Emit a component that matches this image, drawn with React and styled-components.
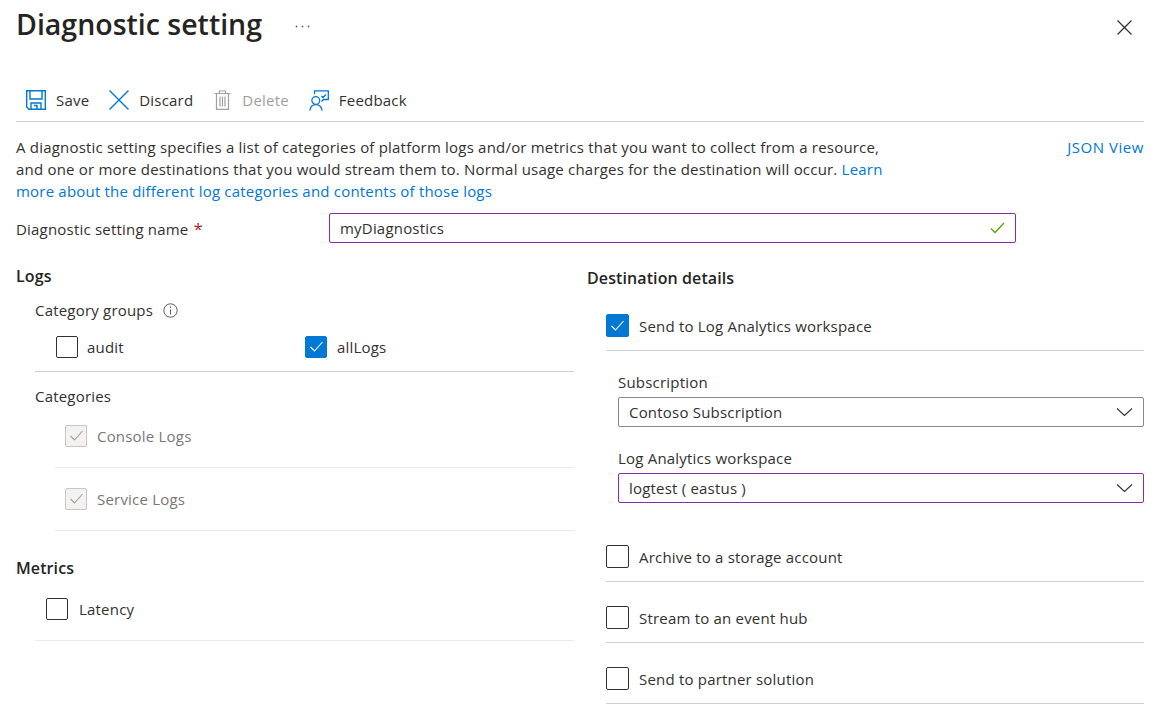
import React from "react";
import styled, { createGlobalStyle } from "styled-components";

const Global = createGlobalStyle`
  html, body { margin: 0; padding: 0; background: #fff; overflow: hidden; }
  body { font-family: "Open Sans", "Noto Sans", sans-serif; font-size: 15px; letter-spacing: 0.2px; color: #323130; }
`;
const Page = styled.div`
  width: 1160px; height: 724px; box-sizing: border-box; padding: 0 16px; overflow: hidden;
`;
const Header = styled.header`
  height: 50px; display: flex; align-items: center; position: relative;
`;
const Title = styled.h1`
  margin: 0 0 2px; font-size: 28.5px; font-weight: 600; color: #252423; letter-spacing: 0; line-height: 48px;
`;
const More = styled.span`
  margin-left: 33px; margin-top: 2px; display: flex;
`;
const Close = styled.span`
  margin-left: auto; margin-right: 11px; margin-top: 4px; display: flex;
`;
const Toolbar = styled.nav`
  margin-top: 26px; height: 46px; box-sizing: border-box; border-bottom: 1px solid #d2d0ce;
  display: flex; align-items: center; padding: 3px 0 0 10px; width: 1128px;
`;
const ToolItem = styled.span`
  display: flex; align-items: center; gap: ${p => p.$gap}px; margin-right: ${p => p.$mr}px;
  color: ${p => (p.$off ? "#a19f9d" : "#323130")};
`;
const Intro = styled.div`
  display: flex; justify-content: space-between; width: 1128px; margin-top: 14px;
`;
const Desc = styled.p`
  margin: 0; width: 868px; line-height: 22px;
`;
const A = styled.span`
  color: #0078d4;
`;
const JsonLink = styled.span`
  color: #0078d4; letter-spacing: 0.55px; padding-top: 1px;
`;
const NameRow = styled.div`
  display: flex; align-items: center; height: 30px; margin-top: 11px; width: 1000px;
`;
const NameLabel = styled.label`
  width: 313px; padding-top: 2px;
`;
const Req = styled.span`
  color: #a4262c; font-size: 17px; line-height: 15px; margin-left: 1px;
`;
const Field = styled.div`
  flex: ${p => (p.$grow ? 1 : "none")}; height: ${p => p.$h}px; box-sizing: border-box;
  border: 1px solid ${p => (p.$focus ? "#8a2da5" : "#8a8886")}; border-radius: 2px;
  display: flex; align-items: center; justify-content: space-between; padding: 0 10px;
`;
const Columns = styled.div`
  display: grid; grid-template-columns: 558px 557px; column-gap: 13px; width: 1128px;
`;
const Col = styled.section`
  min-width: 0;
`;
const H2 = styled.h2`
  margin: ${p => p.$mt}px 0 0; font-size: 16px; font-weight: 600; letter-spacing: 0.1px; color: #252423; line-height: 22px;
`;
const Indent = styled.div`
  margin-left: ${p => p.$l}px;
`;
const Sub = styled.div`
  display: flex; align-items: center; gap: 10px; line-height: 20px; padding-bottom: 2px; margin-top: ${p => p.$mt}px;
`;
const GroupRow = styled.div`
  display: grid; grid-template-columns: 249px 1fr; padding-left: 21px; height: 38px; box-sizing: border-box;
  margin-top: 12px; padding-top: 1px; border-bottom: 1px solid #d2d0ce; align-items: start;
`;
const Check = styled.label`
  display: flex; align-items: center; gap: ${p => p.$gap}px; height: 23px;
  color: ${p => (p.$off ? "#797775" : "#323130")};
`;
const RowLine = styled.div`
  height: ${p => p.$h}px; box-sizing: border-box; margin-left: ${p => p.$ml || 0}px;
  padding-left: ${p => p.$l || 0}px; padding-top: ${p => p.$t}px;
  border-bottom: 1px solid ${p => p.$c || "#edebe9"}; margin-top: ${p => p.$mt || 0}px;
`;
const Box = styled.span`
  width: ${p => p.$size}px; height: ${p => p.$size}px; flex: none; box-sizing: border-box; border-radius: 2px;
  display: flex; align-items: center; justify-content: center;
  border: 1px solid ${p => (p.$on ? "#0078d4" : p.$off ? "#c8c6c4" : "#323130")};
  background: ${p => (p.$on ? "#0078d4" : p.$off ? "#f3f2f1" : "#fff")};
`;
const Form = styled.div`
  padding-left: 31px; margin-top: 20px;
`;
const FieldLabel = styled.div`
  line-height: 22px; margin-top: ${p => p.$mt || 0}px; margin-bottom: 4px;
`;

const Tick = ({ c }) => (
  <svg width="15" height="13" viewBox="0 0 15 13" fill="none" stroke={c} strokeWidth="1.1"><path d="M1.5 7 L5.5 11 L13.5 2" /></svg>
);
const CheckBox = ({ on, off, label, gap = 10, size = 22 }) => (
  <Check $off={off} $gap={gap}>
    <Box $on={on} $off={off} $size={size}>{(on || off) && <Tick c={on ? "#fff" : "#a19f9d"} />}</Box>
    {label}
  </Check>
);
const Chevron = () => (
  <svg width="17" height="10" viewBox="0 0 17 10" fill="none" stroke="#323130" strokeWidth="1.1"><path d="M1 1.5 L8.5 8.5 L16 1.5" /></svg>
);

export default function App() {
  return (
    <Page>
      <Global />
      <Header>
        <Title>Diagnostic setting</Title>
        <More>
          <svg width="15" height="3" viewBox="0 0 15 3" fill="#605e5c"><circle cx="1.5" cy="1.5" r=".9"/><circle cx="7.5" cy="1.5" r=".9"/><circle cx="13.5" cy="1.5" r=".9"/></svg>
        </More>
        <Close>
          <svg width="17" height="17" viewBox="0 0 17 17" stroke="#323130" strokeWidth="1.2"><path d="M1.5 1.5 L15.5 15.5 M15.5 1.5 L1.5 15.5"/></svg>
        </Close>
      </Header>
      <Toolbar>
        <ToolItem $gap={10} $mr={20}>
          <svg width="20" height="20" viewBox="0 0 20 20" fill="none" stroke="#0078d4" strokeWidth="1.4"><path d="M.7.7 H19.3 V19.3 H3 L.7 17 Z M4 .7 V9 H16 V.7 M5 19.3 V13 H15 V19.3 M8 15.5 H11 V19" /></svg>
          Save
        </ToolItem>
        <ToolItem $gap={10} $mr={21}>
          <svg width="20" height="20" viewBox="0 0 20 20" fill="none" stroke="#0078d4" strokeWidth="1.4"><path d="M.5.5 L19.5 19.5 M19.5.5 L.5 19.5"/></svg>
          Discard
        </ToolItem>
        <ToolItem $off $gap={11} $mr={20}>
          <svg width="17" height="20" viewBox="0 0 17 20" fill="none" stroke="#a19f9d" strokeWidth="1.2"><path d="M0.5 3.5 H16.5 M5.5 3 V1 H11.5 V3 M2.5 3.5 V19.4 H14.5 V3.5 M6 6.5 V16.5 M8.5 6.5 V16.5 M11 6.5 V16.5"/></svg>
          Delete
        </ToolItem>
        <ToolItem $gap={10}>
          <svg width="20" height="21" viewBox="0 0 20 21" fill="none" stroke="#0078d4" strokeWidth="1.3"><path d="M5.5 4 V.8 H19.3 V9.5 H14.5 L12.5 11.5 M17 4.5 L14 7.5 L12.5 6"/><circle cx="6.8" cy="10.5" r="3.9"/><path d="M.8 20.5 C1.5 16.5 3.5 14.7 6.8 14.7 C10 14.7 12.3 16.5 13.2 20.5"/></svg>
          Feedback
        </ToolItem>
      </Toolbar>
      <Intro>
        <Desc>
          A diagnostic setting specifies a list of categories of platform logs and/or metrics that you want to collect from a resource, and one or more destinations that you would stream them to. Normal usage charges for the destination will occur. <A>Learn more about the different log categories and contents of those logs</A>
        </Desc>
        <JsonLink>JSON View</JsonLink>
      </Intro>
      <NameRow>
        <NameLabel>Diagnostic setting name <Req>*</Req></NameLabel>
        <Field $focus $grow $h={30}>
          myDiagnostics
          <svg width="15" height="12" viewBox="0 0 15 12" fill="none" stroke="#57a300" strokeWidth="1.3"><path d="M1 6.5 L5 10.5 L14 1"/></svg>
        </Field>
      </NameRow>
      <Columns>
        <Col>
          <H2 $mt={22}>Logs</H2>
          <Indent $l={19}>
            <Sub $mt={13}>
              Category groups
              <svg width="15" height="15" viewBox="0 0 15 15" fill="none" stroke="#605e5c"><circle cx="7.5" cy="7.5" r="6.7"/><path d="M7.5 6.5 V11.5 M7.5 3.5 V5"/></svg>
            </Sub>
            <GroupRow>
              <CheckBox label="audit" gap={9} />
              <CheckBox on label="allLogs" />
            </GroupRow>
            <Sub $mt={14}>Categories</Sub>
            <RowLine $h={60} $ml={20} $l={10} $t={16}><CheckBox off label="Console Logs" /></RowLine>
            <RowLine $h={63} $ml={20} $l={10} $t={19}><CheckBox off label="Service Logs" /></RowLine>
          </Indent>
          <H2 $mt={26}>Metrics</H2>
          <Indent $l={19}>
            <RowLine $h={62} $l={11} $t={18}><CheckBox label="Latency" gap={11} /></RowLine>
          </Indent>
        </Col>
        <Col>
          <H2 $mt={24}>Destination details</H2>
          <RowLine $h={67} $ml={19} $t={30} $c="#d2d0ce" $mt={-5}><CheckBox on size={23} label="Send to Log Analytics workspace" /></RowLine>
          <Form>
            <FieldLabel>Subscription</FieldLabel>
            <Field $h={30}>Contoso Subscription<Chevron /></Field>
            <FieldLabel $mt={20}>Log Analytics workspace</FieldLabel>
            <Field $focus $h={30}>logtest ( eastus )<Chevron /></Field>
          </Form>
          <RowLine $h={79} $ml={19} $t={42} $c="#d2d0ce"><CheckBox size={23} label="Archive to a storage account" /></RowLine>
          <RowLine $h={61} $ml={19} $t={24} $c="#d2d0ce"><CheckBox size={23} label="Stream to an event hub" /></RowLine>
          <RowLine $h={61} $ml={19} $t={24} $c="#d2d0ce"><CheckBox size={23} label="Send to partner solution" /></RowLine>
        </Col>
      </Columns>
    </Page>
  );
}
